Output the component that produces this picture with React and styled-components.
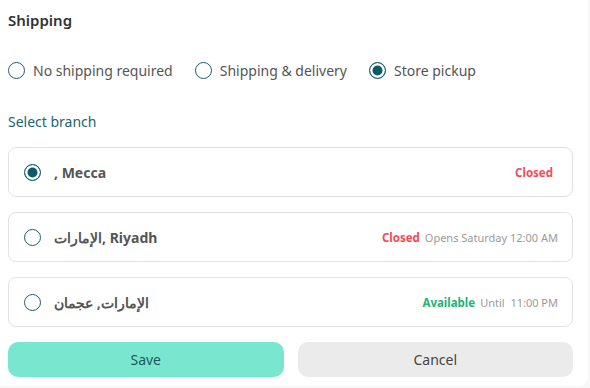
import React, { useState } from "react";
import styled, { createGlobalStyle } from "styled-components";

const GlobalStyle = createGlobalStyle`
	html, body {
		margin: 0;
		padding: 0;
		background: #f7f7f7;
		font-family: "Noto Sans", "Liberation Sans", sans-serif;
	}
`;

const branches = [
	{ id: 1, name: ", Mecca", status: "closed", note: "" },
	{ id: 2, name: "الإمارات, Riyadh", status: "closed", note: "Opens Saturday 12:00 AM" },
	{ id: 3, name: "الإمارات, عجمان", status: "available", note: "Until  11:00 PM" },
];

const shippingOptions = ["No shipping required", "Shipping & delivery", "Store pickup"];

const App = () => {
	const [method, setMethod] = useState("Store pickup");
	const [branch, setBranch] = useState(1);

	return (
		<>
			<GlobalStyle />
			<StPanel>
				<StTitle>Shipping</StTitle>
				<StOptionRow>
					{shippingOptions.map((opt) => (
						<StOption key={opt} onClick={() => setMethod(opt)}>
							<StRadio $checked={method === opt} />
							{opt}
						</StOption>
					))}
				</StOptionRow>
				<StLabel>Select branch</StLabel>
				<StBranchList>
					{branches.map((b) => (
						<StBranchCard key={b.id} onClick={() => setBranch(b.id)}>
							<StRadio $checked={branch === b.id} />
							<StBranchName>{b.name}</StBranchName>
							<StStatus $hasNote={!!b.note}>
								<StStatusText $status={b.status}>
									{b.status === "closed" ? "Closed" : "Available"}
								</StStatusText>
								{b.note && <StNote>{b.note}</StNote>}
							</StStatus>
						</StBranchCard>
					))}
				</StBranchList>
				<StButtons>
					<StButton $primary>Save</StButton>
					<StButton>Cancel</StButton>
				</StButtons>
			</StPanel>
		</>
	);
};

export default App;

const StPanel = styled.div`
	width: 588px;
	height: 386px;
	box-sizing: border-box;
	background: #fff;
	border-radius: 0 0 10px 0;
	padding: 9px 15px 0 8px;
`;

const StTitle = styled.h2`
	margin: 0;
	font-size: 15px;
	font-weight: 600;
	color: #333;
	line-height: 22px;
`;

const StOptionRow = styled.div`
	display: flex;
	align-items: center;
	gap: 22px;
	margin-top: 28px;
	height: 22px;
`;

const StOption = styled.label`
	display: flex;
	align-items: center;
	gap: 8px;
	font-size: 14px;
	color: #555;
	cursor: pointer;
`;

const StRadio = styled.span`
	display: inline-block;
	box-sizing: border-box;
	width: 17px;
	height: 17px;
	border-radius: 50%;
	border: 1.5px solid #1d5d6b;
	flex-shrink: 0;
	background: ${(p) => (p.$checked ? "#0e5a66" : "#fff")};
	box-shadow: ${(p) => (p.$checked ? "inset 0 0 0 2.5px #fff" : "none")};
`;

const StLabel = styled.div`
	margin-top: 30px;
	font-size: 14px;
	color: #1d6470;
	line-height: 22px;
`;

const StBranchList = styled.div`
	display: flex;
	flex-direction: column;
	gap: 15px;
	margin-top: 14px;
`;

const StBranchCard = styled.div`
	display: flex;
	align-items: center;
	height: 50px;
	box-sizing: border-box;
	border: 1px solid #e2e2e2;
	border-radius: 8px;
	padding: 0 14px 0 15px;
	cursor: pointer;
`;

const StBranchName = styled.span`
	margin-left: 13px;
	font-size: 14px;
	font-weight: 700;
	color: #555;
`;

const StStatus = styled.span`
	margin-left: auto;
	display: flex;
	align-items: center;
	gap: 5px;
	padding-right: ${(p) => (p.$hasNote ? "0" : "5px")};
`;

const StStatusText = styled.span`
	font-size: 11.5px;
	font-weight: 700;
	color: ${(p) => (p.$status === "closed" ? "#f04c55" : "#1fb27a")};
`;

const StNote = styled.span`
	font-size: 11px;
	color: #9a9a9a;
	white-space: pre;
`;

const StButtons = styled.div`
	display: grid;
	grid-template-columns: 1fr 1fr;
	gap: 14px;
	margin-top: 15px;
`;

const StButton = styled.button`
	height: 35px;
	border: none;
	border-radius: 10px;
	font-family: inherit;
	font-size: 14px;
	cursor: pointer;
	background: ${(p) => (p.$primary ? "#79e7cf" : "#ebebeb")};
	color: ${(p) => (p.$primary ? "#1e5960" : "#444")};
`;
